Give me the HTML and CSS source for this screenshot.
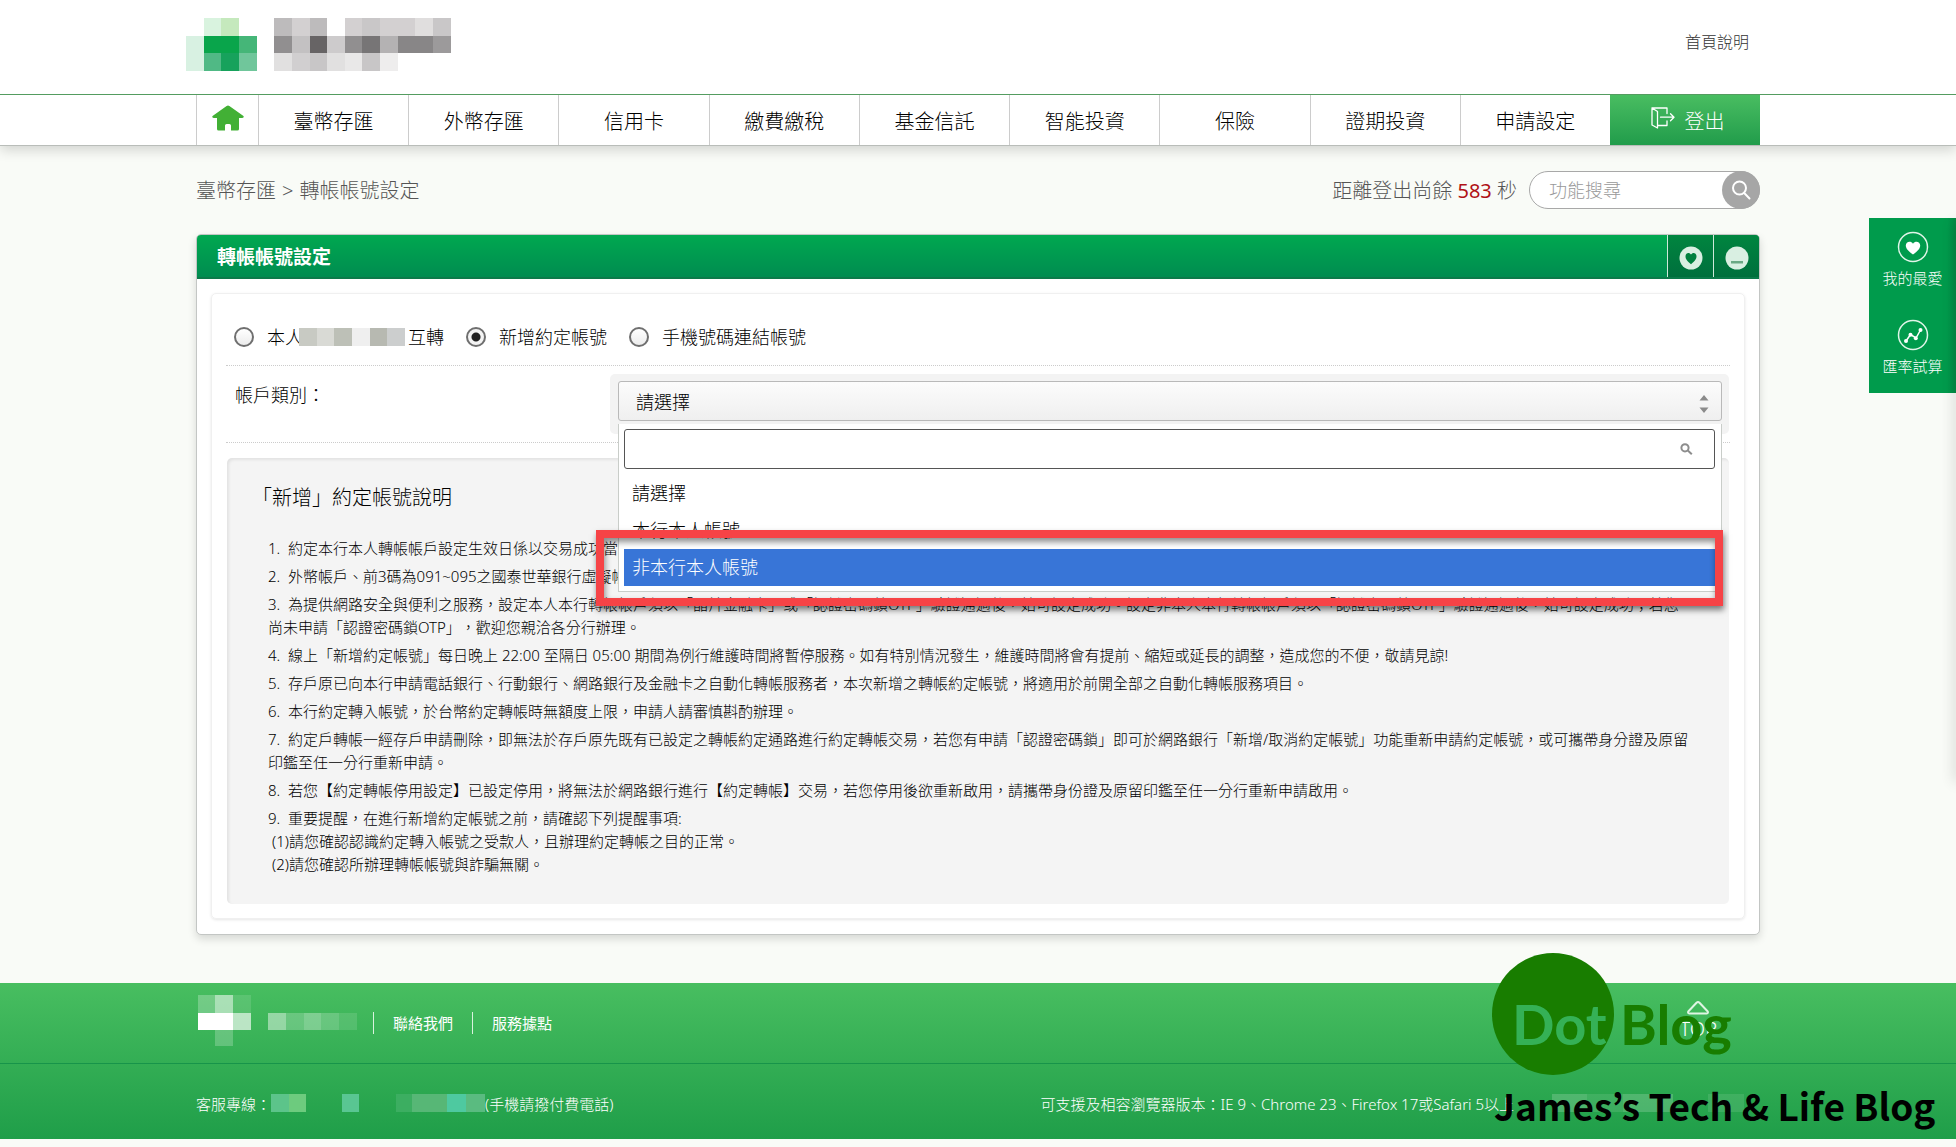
FILE: index.html
```html
<!DOCTYPE html>
<html lang="zh-Hant-TW">
<head>
<meta charset="utf-8">
<meta name="viewport" content="width=device-width, initial-scale=1">
<title>轉帳帳號設定</title>
<link rel="stylesheet" href="styles.css">
</head>
<body>
<header class="site-header">
  <div class="container brand-bar">
    <svg class="brand-logo" width="265" height="53" viewBox="186 18 265 53" shape-rendering="crispEdges" aria-hidden="true">
      <path fill="#d9f3df" d="M204 18h17v18h-17z"/><path fill="#c5e9bd" d="M221 18h18v18h-18z"/>
      <path fill="#d8f1e2" d="M186 36h18v35h-18z"/><path fill="#09a54b" d="M204 36h35v17h-35z"/><path fill="#45b678" d="M239 36h18v17h-18z"/>
      <path fill="#50b985" d="M204 53h17v18h-17z"/><path fill="#17a25c" d="M221 53h18v18h-18z"/><path fill="#70c69b" d="M239 53h18v18h-18z"/>
      <path fill="#bdbbbc" d="M274 18h18v18h-18zM310 18h17v18h-17z"/><path fill="#d3d0d1" d="M292 18h18v18h-18zM345 18h17v18h-17zM380 18h35v18h-35z"/>
      <path fill="#c9c7c8" d="M362 18h18v18h-18zM433 18h18v18h-18z"/><path fill="#e0dede" d="M415 18h18v18h-18z"/>
      <path fill="#918f90" d="M274 36h18v17h-18zM345 36h17v17h-17z"/><path fill="#c3c1c2" d="M292 36h18v17h-18z"/><path fill="#676465" d="M310 36h17v17h-17z"/>
      <path fill="#cdcbcc" d="M327 36h18v17h-18z"/><path fill="#777576" d="M362 36h18v17h-18z"/><path fill="#b4b2b3" d="M380 36h18v17h-18z"/>
      <path fill="#888687" d="M398 36h35v17h-35z"/><path fill="#9c9a9b" d="M433 36h18v17h-18z"/>
      <path fill="#e1e0e0" d="M274 53h18v18h-18zM327 53h18v18h-18z"/><path fill="#d1cfd0" d="M292 53h18v18h-18z"/><path fill="#c8c6c7" d="M310 53h17v18h-17zM362 53h18v18h-18z"/>
      <path fill="#e9e8e8" d="M345 53h17v18h-17z"/><path fill="#eeeded" d="M380 53h18v18h-18z"/>
    </svg>
    <a class="help-link" href="#">首頁說明</a>
  </div>
  <nav class="main-nav" aria-label="主選單">
    <div class="container nav-list">
      <a class="nav-home" href="#" aria-label="首頁">
        <svg width="32" height="26" viewBox="0 0 32 26" aria-hidden="true"><path fill="#42b035" d="M14.6 1.1a2.4 2.4 0 0 1 2.8 0l13.7 9.6c1.2.9.6 2.3-.8 2.3H27v11a1.6 1.6 0 0 1-1.6 1.6H19v-5a1.6 1.6 0 0 0-1.6-1.600h-2.800a1.600 1.600 0 0 0-1.600 1.600v5H6.600A1.600 1.600 0 0 1 5 24V13H1.700C.300 13-.300 11.600.900 10.700z"/></svg>
      </a>
      <a class="nav-item" href="#">臺幣存匯</a>
      <a class="nav-item" href="#">外幣存匯</a>
      <a class="nav-item" href="#">信用卡</a>
      <a class="nav-item" href="#">繳費繳稅</a>
      <a class="nav-item" href="#">基金信託</a>
      <a class="nav-item" href="#">智能投資</a>
      <a class="nav-item" href="#">保險</a>
      <a class="nav-item" href="#">證期投資</a>
      <a class="nav-item" href="#">申請設定</a>
      <button class="nav-logout" type="button">
        <svg width="24" height="28" viewBox="0 0 24 28" fill="none" stroke="#fff" stroke-width="1.300" stroke-linejoin="round" stroke-linecap="round" aria-hidden="true"><path d="M16 7.500V2H1v17l5.500 3V5.500L1 2M6.500 19.500H16V15M9.500 11.200H23M19.500 7.800 23 11.200l-3.500 3.500"/></svg>
        登出
      </button>
    </div>
  </nav>
</header>

<main class="container page">
  <div class="topline">
    <p class="breadcrumb"><a href="#">臺幣存匯</a><span>&gt;</span><span>轉帳帳號設定</span></p>
    <div class="session">
      <p class="timer">距離登出尚餘 <strong>583</strong> 秒</p>
      <form class="search" role="search">
        <input type="text" placeholder="功能搜尋" aria-label="功能搜尋">
        <button type="button" aria-label="搜尋">
          <svg width="20" height="20" viewBox="0 0 20 20" fill="none" stroke="#fff" stroke-width="2" stroke-linecap="round" aria-hidden="true"><circle cx="8.500" cy="8" r="6.500"/><path d="M13.200 13 18.500 18.500"/></svg>
        </button>
      </form>
    </div>
  </div>

  <section class="panel">
    <div class="panel-head">
      <h1>轉帳帳號設定</h1>
      <button class="head-button" type="button" aria-label="加入我的最愛">
        <svg width="24" height="24" viewBox="0 0 24 24" aria-hidden="true"><circle cx="12" cy="12" r="11.500" fill="#d9efe2"/><path fill="#00803f" d="M12 18.200C8 15 6.500 13 6.500 10.300c0-3.400 3.800-4.500 5.500-1.700 1.700-2.800 5.500-1.700 5.500 1.700 0 2.700-1.500 4.700-5.500 7.900z"/></svg>
      </button>
      <button class="head-button" type="button" aria-label="收合">
        <svg width="24" height="24" viewBox="0 0 24 24" aria-hidden="true"><circle cx="12" cy="12" r="11.500" fill="#d9efe2"/><path fill="#6aa884" d="M6 15h12v2.500H6z"/></svg>
      </button>
    </div>
    <div class="panel-body">
      <div class="card">
        <div class="radio-row">
          <label class="choice"><input type="radio" name="mode"><span>本人</span><svg class="masked-name" width="106" height="18" viewBox="0 0 106 18" shape-rendering="crispEdges" aria-hidden="true"><path fill="#c8cac3" d="M0 0h18v18H0z"/><path fill="#d9dad5" d="M18 0h17v18H18z"/><path fill="#bdc0b7" d="M35 0h18v18H35z"/><path fill="#efefef" d="M53 0h18v18H53z"/><path fill="#b7b9b1" d="M71 0h17v18H71z"/><path fill="#cccece" d="M88 0h18v18H88z"/></svg><span>互轉</span></label>
          <label class="choice"><input type="radio" name="mode" checked><span>新增約定帳號</span></label>
          <label class="choice"><input type="radio" name="mode"><span>手機號碼連結帳號</span></label>
        </div>
        <div class="field-row">
          <label class="field-label" for="account-type">帳戶類別：</label>
          <div class="field-control">
            <div class="select-box">
              <select id="account-type"><option>請選擇</option><option>本行本人帳號</option><option>非本行本人帳號</option></select>
              <svg class="select-arrows" width="10" height="20" viewBox="0 0 10 20" fill="#8b8b8b" aria-hidden="true"><path d="M5 1 9.500 6.500H.500zM5 19 .500 13.500h9z"/></svg>
            </div>
            <div class="dropdown">
              <div class="filter-box">
                <input type="text" aria-label="篩選帳戶類別">
                <svg width="13" height="12" viewBox="0 0 13 12" fill="none" stroke="#8d8d8d" stroke-width="2" aria-hidden="true"><circle cx="5" cy="4.800" r="3.600"/><path d="m7.800 7.400 4 3.800"/></svg>
              </div>
              <ul class="options" role="listbox" aria-label="帳戶類別">
                <li role="option">請選擇</li>
                <li role="option">本行本人帳號</li>
                <li class="is-active" role="option" aria-selected="true">非本行本人帳號</li>
              </ul>
              <div class="callout-frame"></div>
            </div>
          </div>
        </div>
        <section class="notes">
          <h2>「新增」約定帳號說明</h2>
          <ol>
            <li>約定本行本人轉帳帳戶設定生效日係以交易成功當日生效。</li>
            <li>外幣帳戶、前3碼為091~095之國泰世華銀行虛擬帳號不得設定。</li>
            <li>為提供網路安全與便利之服務，設定本人本行轉帳帳戶須以「晶片金融卡」或「認證密碼鎖OTP」驗證通過後，始可設定成功。設定非本人本行轉帳帳戶須以「認證密碼鎖OTP」驗證通過後，始可設定成功；若您<br>尚未申請「認證密碼鎖OTP」，歡迎您親洽各分行辦理。</li>
            <li>線上「新增約定帳號」每日晚上 22:00 至隔日 05:00 期間為例行維護時間將暫停服務。如有特別情況發生，維護時間將會有提前、縮短或延長的調整，造成您的不便，敬請見諒!</li>
            <li>存戶原已向本行申請電話銀行、行動銀行、網路銀行及金融卡之自動化轉帳服務者，本次新增之轉帳約定帳號，將適用於前開全部之自動化轉帳服務項目。</li>
            <li>本行約定轉入帳號，於台幣約定轉帳時無額度上限，申請人請審慎斟酌辦理。</li>
            <li>約定戶轉帳一經存戶申請刪除，即無法於存戶原先既有已設定之轉帳約定通路進行約定轉帳交易，若您有申請「認證密碼鎖」即可於網路銀行「新增/取消約定帳號」功能重新申請約定帳號，或可攜帶身分證及原留<br>印鑑至任一分行重新申請。</li>
            <li>若您【約定轉帳停用設定】已設定停用，將無法於網路銀行進行【約定轉帳】交易，若您停用後欲重新啟用，請攜帶身份證及原留印鑑至任一分行重新申請啟用。</li>
            <li>重要提醒，在進行新增約定帳號之前，請確認下列提醒事項:
              <p>(1)請您確認認識約定轉入帳號之受款人，且辦理約定轉帳之目的正常。</p>
              <p>(2)請您確認所辦理轉帳帳號與詐騙無關。</p>
            </li>
          </ol>
        </section>
      </div>
    </div>
  </section>
</main>

<footer class="site-footer">
  <div class="footer-top">
    <div class="container footer-row">
      <svg class="footer-logo" width="159" height="51" viewBox="198 995 159 51" fill="#fff" shape-rendering="crispEdges" aria-hidden="true">
        <path opacity=".25" d="M198 995h17v18h-17z"/><path opacity=".55" d="M215 995h18v18h-18z"/><path opacity=".12" d="M233 995h18v18h-18z"/>
        <path d="M198 1013h35v17h-35z"/><path opacity=".65" d="M233 1013h18v17h-18z"/><path opacity=".22" d="M215 1030h18v16h-18z"/>
        <path opacity=".45" d="M268 1013h18v17h-18z"/><path opacity=".22" d="M286 1013h18v17h-18zM321 1013h18v17h-18z"/><path opacity=".33" d="M304 1013h17v17h-17z"/><path opacity=".12" d="M339 1013h18v17h-18z"/>
      </svg>
      <a class="footer-link" href="#">聯絡我們</a>
      <a class="footer-link" href="#">服務據點</a>
      <a class="to-top" href="#">
        <svg width="24" height="14" viewBox="0 0 24 14" fill="none" stroke="#dff5e3" stroke-width="2" stroke-linejoin="round" aria-hidden="true"><path d="M10.500 1.800a2 2 0 0 1 3 0l8 8.400c.900 1.100.500 2.300-.800 2.300H3.300c-1.300 0-1.700-1.200-.800-2.300z"/></svg>
        TOP
      </a>
    </div>
  </div>
  <div class="container footer-bottom">
    <p class="hotline">客服專線：<svg width="214" height="18" viewBox="272 0 214 18" shape-rendering="crispEdges" aria-hidden="true"><path fill="#5cc48a" d="M272 0h18v18h-18z"/><path fill="#6dcb7e" d="M290 0h17v18h-17z"/><path fill="#59c692" d="M343 0h17v18h-17z"/><path fill="#3cae61" d="M397 0h16v18h-16z"/><path fill="#57b776" d="M413 0h35v18h-35z"/><path fill="#4ec9a0" d="M448 0h19v18h-19z"/><path fill="#5abb80" d="M467 0h19v18h-19z"/></svg>(手機請撥付費電話)</p>
    <p class="browsers">可支援及相容瀏覽器版本：IE 9、Chrome 23、Firefox 17或Safari 5以上<svg width="208" height="18" viewBox="0 0 208 18" fill="#fff" shape-rendering="crispEdges" aria-hidden="true"><path opacity=".18" d="M0 0h35v18H0zM71 0h50v18H71z"/><path opacity=".1" d="M35 0h36v18H35zM156 0h36v18h-36z"/></svg></p>
  </div>
</footer>

<aside class="side-tools" aria-label="快捷工具">
  <a href="#">
    <svg width="32" height="32" viewBox="0 0 32 32" aria-hidden="true"><circle cx="16" cy="16" r="14.500" fill="none" stroke="#dff5e8" stroke-width="1.500"/><path fill="#fff" d="M16 23.500C11 19.800 8.800 17.400 8.800 14.500c0-4 5-5.300 7.200-1.800 2.200-3.500 7.200-2.200 7.200 1.800 0 2.900-2.200 5.300-7.200 9z"/></svg>
    我的最愛
  </a>
  <a href="#">
    <svg width="32" height="32" viewBox="0 0 32 32" aria-hidden="true"><circle cx="16" cy="16" r="14.500" fill="none" stroke="#dff5e8" stroke-width="1.500"/><path fill="none" stroke="#fff" stroke-width="1.500" d="m9 22 4.500-6.500 5.500 3.500 4.500-8"/><g fill="#fff"><circle cx="9" cy="22" r="2"/><circle cx="13.500" cy="15.800" r="2"/><circle cx="18.800" cy="19.300" r="2"/><circle cx="23.500" cy="11" r="2"/></g></svg>
    匯率試算
  </a>
</aside>
<div class="drawer-edge"></div>

<div class="watermark" lang="en">
  <p class="wm-logo"><span class="wm-dot">Dot</span><span class="wm-blog">Blog</span></p>
  <p class="wm-name">James’s Tech &amp; Life Blog</p>
</div>
</body>
</html>
```

FILE: styles.css
```css
* { box-sizing: border-box; }

body {
  position: relative;
  margin: 0;
  padding-bottom: 8px;
  background: #f9fbf7;
  color: #000;
  font-family: "Noto Sans", "Noto Sans CJK TC", sans-serif;
  font-size: 18px;
  font-weight: 300;
  text-spacing-trim: space-all;
  overflow-x: hidden;
}

h1, h2, p, ul, ol { margin: 0; padding: 0; }
ul, ol { list-style: none; }
a { color: inherit; text-decoration: none; }
button, input, select { font: inherit; color: inherit; }
svg { display: block; flex: none; }

.container {
  width: 92%;
  max-width: 1564px;
  margin: 0 auto;
}

/* Header */
.site-header {
  position: relative;
  background: #fff;
  box-shadow: 0 4px 12px rgba(0, 0, 0, .16);
}
.brand-bar {
  display: flex;
  justify-content: space-between;
  align-items: flex-start;
  height: 94px;
  padding: 18px 11px 0 0;
}
.brand-logo { margin-left: -10px; }
.help-link {
  padding-top: 12px;
  color: #333;
  font-size: 16px;
  line-height: 24px;
}

.main-nav {
  border-top: 1px solid #549c60;
  border-bottom: 1px solid #b9bdb9;
}
.nav-list { display: flex; height: 50px; }
.nav-home, .nav-item, .nav-logout {
  display: flex;
  align-items: center;
  justify-content: center;
}
.nav-home {
  width: 63px;
  padding-bottom: 5px;
  border: solid #ccc;
  border-width: 0 1px;
}
.nav-item {
  flex: 1;
  border-right: 1px solid #ccc;
  font-size: 20px;
}
.nav-item:nth-last-child(2) { border-right: 0; }
.nav-logout {
  gap: 9px;
  width: 150px;
  padding: 0 0 0 6px;
  border: 0;
  background: linear-gradient(#49bd61, #219c4b);
  color: #fff;
  font-size: 20px;
}

/* Breadcrumb and search */
.page { padding-bottom: 48px; }
.topline {
  display: flex;
  align-items: center;
  justify-content: space-between;
  padding: 25px 0;
  color: #555;
  font-size: 20px;
}
.breadcrumb, .timer {
  padding-top: 2px;
  line-height: 36px;
}
.breadcrumb { display: flex; gap: 6px; }
.session { display: flex; gap: 12px; }
.timer strong { color: #b01116; font-weight: 400; }
.search {
  display: flex;
  width: 231px;
  height: 38px;
  border: 1px solid #a8a8a8;
  border-radius: 19px;
  background: #fff;
}
.search input {
  flex: 1;
  min-width: 0;
  padding: 0 0 0 19px;
  border: 0;
  background: none;
  outline: 0;
  font-size: 18px;
}
.search input::placeholder { color: #999; }
.search button {
  display: grid;
  place-items: center;
  width: 38px;
  height: 38px;
  margin: -1px;
  padding: 0;
  border: 0;
  border-radius: 50%;
  background: #a6a6a6;
}

/* Panel */
.panel {
  border: 1px solid #c3c6c4;
  border-radius: 5px;
  background: #fff;
  box-shadow: 0 4px 8px rgba(0, 0, 0, .14);
}
.panel-head {
  display: flex;
  height: 44px;
  padding-left: 20px;
  border-bottom: 2px solid #0c7a4a;
  border-radius: 4px 4px 0 0;
  background: linear-gradient(#00a850, #008c50);
  overflow: hidden;
}
.panel-head h1 {
  flex: 1;
  padding-top: 2px;
  color: #fff;
  font-size: 19px;
  font-weight: 700;
  line-height: 40px;
}
.head-button {
  display: grid;
  place-items: center;
  width: 46px;
  padding: 3px 0 0;
  border: 0;
  border-left: 1px solid #cfe8da;
  background: linear-gradient(#00853f, #006f3d);
}
.panel-body { padding: 14px 14px 15px; }
.card {
  padding: 0 14px 14px;
  border: 1px solid #f0f0f0;
  border-radius: 5px;
  box-shadow: 0 1px 3px rgba(0, 0, 0, .1);
}
.radio-row {
  display: flex;
  align-items: center;
  gap: 22px;
  padding: 33px 8px 18px;
  border-bottom: 1px dotted #ccc;
  line-height: 20px;
}
.choice { display: flex; align-items: center; }
.choice input {
  appearance: none;
  width: 20px;
  height: 20px;
  margin: 0 13px 0 0;
  border: 2px solid #6f6f6f;
  border-radius: 50%;
  background: linear-gradient(#fff, #ececec);
}
.choice input:checked {
  background: radial-gradient(circle, #222 0, #222 4px, #f4f4f4 5px);
}
.masked-name { margin-right: 3px; margin-left: -4px; }

.field-row {
  display: grid;
  grid-template-columns: 384px 1fr;
  padding: 8px 1px 8px 0;
  border-bottom: 1px dotted #ccc;
}
.field-label {
  padding: 8px 0 0 9px;
  line-height: 26px;
}
.field-control {
  position: relative;
  padding: 7px 7px 13px 8px;
  border-radius: 5px;
  background: #f3f3f3;
}
.select-box { position: relative; }
.select-box select {
  appearance: none;
  display: block;
  width: 100%;
  height: 40px;
  padding: 2px 17px 0;
  border: 1px solid #b9b9b9;
  border-radius: 3px;
  background: linear-gradient(#fcfcfc, #efefef);
}
.select-arrows { position: absolute; top: 13px; right: 13px; pointer-events: none; }

.dropdown {
  position: absolute;
  top: 50px;
  right: 7px;
  left: 8px;
  padding: 5px 6px 5px 5px;
  border: 1px solid #c9cdc9;
  border-top: 0;
  background: #fff;
}
.filter-box { position: relative; }
.filter-box input {
  display: block;
  width: 100%;
  height: 40px;
  padding: 0 40px 0 8px;
  border: 1px solid #555;
  border-radius: 3px;
  outline: 0;
}
.filter-box svg { position: absolute; top: 14px; right: 22px; }
.options { padding-top: 6px; }
.options li { padding: 0 8px; line-height: 37px; }
.options .is-active { background: #3875d7; color: #fff; }
.callout-frame {
  position: absolute;
  top: 106px;
  right: -2px;
  bottom: -15px;
  left: -23px;
  border: 8px solid #f64346;
  box-shadow: 1px 4px 6px rgba(0, 0, 0, .5), inset 1px 4px 6px rgba(0, 0, 0, .45);
}

/* Notes */
.notes {
  margin: 15px 1px 0;
  padding: 25px 22px 28px 25px;
  border-radius: 5px;
  background: #f4f4f4;
  box-shadow: inset 2px 2px 3px rgba(0, 0, 0, .07);
}
.notes h2 {
  font-size: 20px;
  font-weight: 300;
  line-height: 30px;
}
.notes ol {
  display: grid;
  gap: 5px;
  margin: 24px 0 0 16px;
  counter-reset: note;
  font-size: 15px;
  line-height: 23px;
}
.notes li { counter-increment: note; }
.notes li::before {
  content: counter(note) ".";
  display: inline-block;
  width: 20px;
}
.notes li p { padding-left: 4px; }

/* Footer */
.site-footer {
  background: linear-gradient(#48be60, #1f9e49);
  color: #fff;
  font-size: 15px;
  font-weight: 400;
}
.footer-top { border-bottom: 1px solid #17944a; }
.footer-row {
  display: flex;
  align-items: center;
  height: 80px;
}
.footer-logo { margin: 0 16px 6px 2px; }
.footer-link {
  padding: 0 19px;
  border-left: 1px solid #d9f2de;
  line-height: 22px;
}
.to-top {
  display: grid;
  justify-items: center;
  gap: 3px;
  margin: 0 43px 6px auto;
  font-size: 20px;
  font-weight: 300;
  line-height: 22px;
}
.footer-bottom {
  display: flex;
  align-items: center;
  justify-content: space-between;
  height: 75px;
  padding-top: 3px;
  font-weight: 300;
}
.footer-bottom p { display: flex; align-items: center; }
.browsers svg { margin-left: 38px; }

/* Floating shortcuts */
.side-tools {
  position: absolute;
  top: 218px;
  right: 0;
  display: grid;
  gap: 28px;
  width: 87px;
  padding: 13px 0 14px;
  background: linear-gradient(90deg, #009b4c 90%, #068a45);
  color: #fff;
  font-size: 15px;
}
.side-tools a {
  display: grid;
  justify-items: center;
  gap: 2px;
  line-height: 26px;
}
.drawer-edge {
  position: absolute;
  top: 222px;
  right: -4px;
  width: 4px;
  height: 560px;
  box-shadow: 0 0 14px rgba(0, 0, 0, .3);
}

/* Blog watermark laid over the page */
.watermark {
  position: absolute;
  right: 22px;
  bottom: 14px;
  width: 442px;
  font-weight: 700;
  pointer-events: none;
}
.wm-logo {
  display: flex;
  align-items: center;
  color: #187d00;
  font-family: Lato, sans-serif;
  font-size: 56px;
  line-height: 122px;
}
.wm-dot {
  width: 122px;
  height: 122px;
  padding: 10px 0 0 20px;
  border-radius: 50%;
  background: #187d00;
  color: #35b156;
}
.wm-blog {
  height: 122px;
  padding: 10px 0 0 6px;
}
.wm-name {
  padding: 2px 0 0 2px;
  color: #000;
  font-family: "Noto Sans CJK KR", sans-serif;
  font-size: 37px;
  line-height: 56px;
  white-space: nowrap;
}
```
